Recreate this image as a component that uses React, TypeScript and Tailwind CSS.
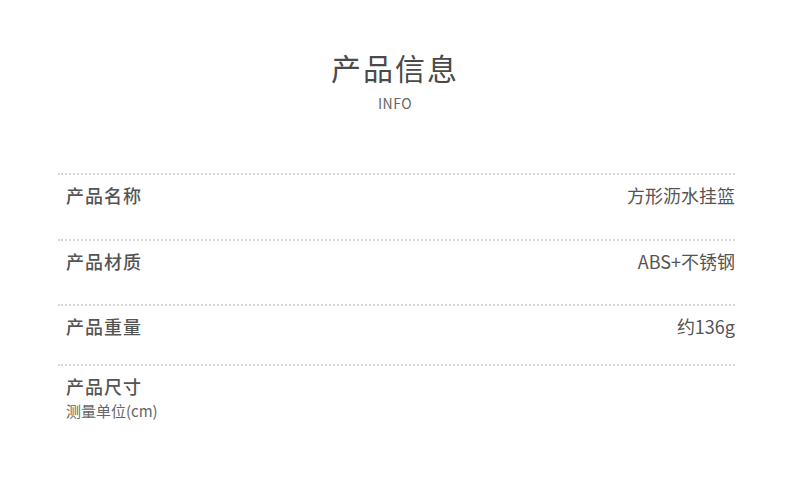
import React from 'react';

const rows = [
  { label: '产品名称', value: '方形沥水挂篮', h: 'h-[66px]' },
  { label: '产品材质', value: 'ABS+不锈钢', h: 'h-[65px]' },
  { label: '产品重量', value: '约136g', h: 'h-[60px]' },
];

const App: React.FC = () => {
  return (
    <div
      className="w-[790px] h-[485px] bg-white text-[#555] overflow-hidden"
      style={{ fontFamily: '"Noto Sans CJK SC", "Noto Sans", sans-serif' }}
    >
      <div className="flex flex-col items-center pt-[48px]">
        <h1 className="text-[30px] leading-[38px] tracking-[2px] text-[#4a4a4a] font-normal">产品信息</h1>
        <p className="text-[14px] leading-[16px] mt-[9px] text-[#666] tracking-[0.5px]">INFO</p>
      </div>

      <div className="ml-[58px] w-[677px] mt-[62px]">
        {rows.map((row) => (
          <div
            key={row.label}
            className={`${row.h} border-t-2 border-dotted border-[#d6d6d6] flex justify-between items-start pt-[8px] pl-[8px]`}
          >
            <span className="text-[18px] leading-[24px] tracking-[1px] font-medium text-[#555]">{row.label}</span>
            <span className="text-[18px] leading-[24px] text-[#555]">{row.value}</span>
          </div>
        ))}
        <div className="border-t-2 border-dotted border-[#d6d6d6] pt-[8px] pl-[8px] flex flex-col">
          <span className="text-[18px] leading-[24px] tracking-[1px] font-medium text-[#555]">产品尺寸</span>
          <span className="text-[15px] leading-[18px] mt-[4px] text-[#666]">测量单位(cm)</span>
        </div>
      </div>
    </div>
  );
};

export default App;
